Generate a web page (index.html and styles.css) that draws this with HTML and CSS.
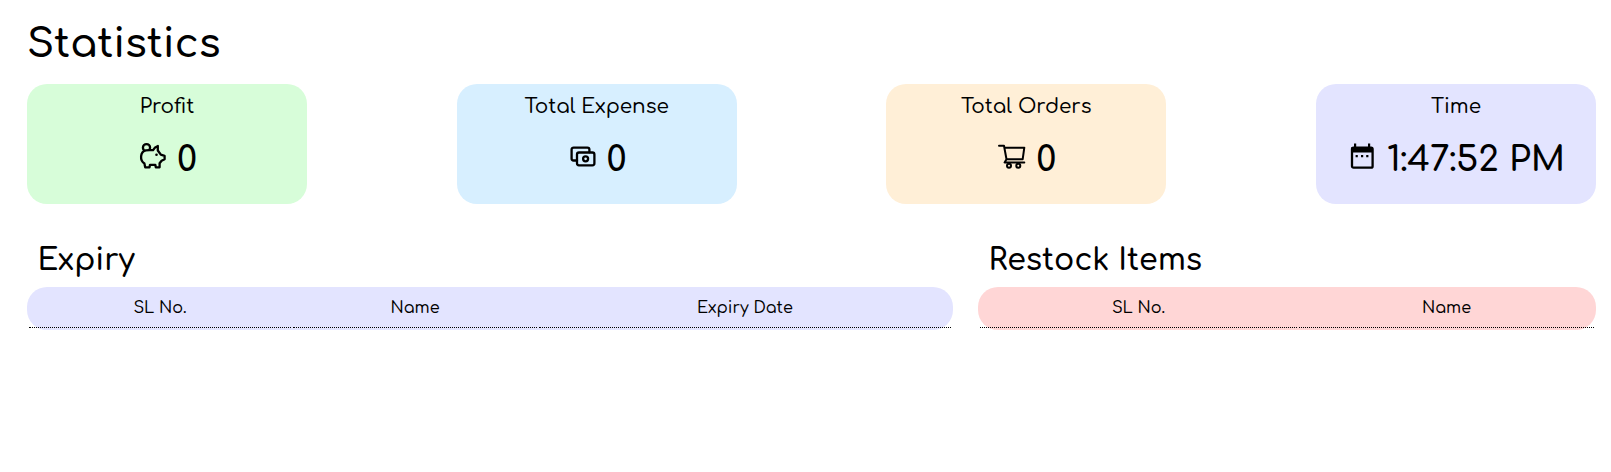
FILE: index.html
```html
<!DOCTYPE html>
<html lang="en">
<head>
<meta charset="utf-8">
<title>Statistics</title>
<link rel="stylesheet" href="styles.css">
</head>
<body>
<main class="page">
  <h1 class="title">Statistics</h1>
  <section class="cards">
    <article class="card card-profit">
      <h2 class="label">Profit</h2>
      <div class="reading">
        <svg class="icon" viewBox="0 0 28 28"><circle cx="7.5" cy="5.7" r="3.6"/><path class="mask-profit" d="M10.5 8.2H14C15 6.2 16.8 4.7 18.8 4V8.5L21.8 12.7 25.6 13.8V17.3L22.6 18.8 20.6 21.3V25.3H16.8L16.3 22.8H11L10.5 25.3H6.2L5.4 21.5C.5 18 1 9.5 7 8.3Z"/><circle class="solid" cx="17.5" cy="12.7" r="1.3"/></svg>
        <span class="value">0</span>
      </div>
    </article>
    <article class="card card-expense">
      <h2 class="label">Total Expense</h2>
      <div class="reading">
        <svg class="icon" viewBox="0 0 28 28"><path d="M8 18.5H4.6a2 2 0 0 1-2-2V7.6a2 2 0 0 1 2-2h13.8a2 2 0 0 1 2 2v2.7"/><rect x="8" y="10.5" width="17.4" height="12.8" rx="2"/><circle cx="16.6" cy="16.8" r="2.5"/></svg>
        <span class="value">0</span>
      </div>
    </article>
    <article class="card card-orders">
      <h2 class="label">Total Orders</h2>
      <div class="reading">
        <svg class="icon icon-cart" viewBox="0 0 28 28"><path d="M1 3.7H6L8.5 17.2H24.7L26.3 5.7H6.4M8.5 17.2 6.6 20.4H26.3"/><circle cx="11" cy="23.7" r="2"/><circle cx="20.3" cy="23.7" r="2"/></svg>
        <span class="value">0</span>
      </div>
    </article>
    <article class="card card-time">
      <h2 class="label">Time</h2>
      <div class="reading">
        <svg class="icon" viewBox="0 0 28 28"><rect x="3" y="5.6" width="20.6" height="20.1" rx="1.5"/><path class="solid" d="M2.5 5H24V10.5H2.5ZM5 1.4H7.2V6H5ZM19 1.4H21.2V6H19ZM6.6 13H8.8V15.2H6.6ZM12 13H14.2V15.2H12ZM17.2 13H19.4V15.2H17.2Z"/></svg>
        <span class="value">1:47:52 PM</span>
      </div>
    </article>
  </section>
  <section class="panels">
    <div class="panel-expiry">
      <h2 class="heading">Expiry</h2>
      <table class="list list-expiry">
        <colgroup><col class="col-sl"><col class="col-name"><col></colgroup>
        <thead><tr><th>SL No.</th><th>Name</th><th>Expiry Date</th></tr></thead>
      </table>
    </div>
    <div class="panel-restock">
      <h2 class="heading">Restock Items</h2>
      <table class="list list-restock">
        <colgroup><col class="col-half"><col></colgroup>
        <thead><tr><th>SL No.</th><th>Name</th></tr></thead>
      </table>
    </div>
  </section>
</main>
</body>
</html>
```
FILE: styles.css
```css
* { box-sizing: border-box; }
body { margin: 0; background: #fff; color: #000; font-family: Comfortaa, Lato, sans-serif; }
h1, h2 { margin: 0; font-weight: 500; white-space: nowrap; }
.page { padding: 16px 15px 0 27px; }
.title { height: 68px; line-height: 57px; font-size: 40px; font-weight: 600; }
.cards { display: flex; justify-content: space-between; }
.card { width: 280px; height: 120px; border-radius: 20px; padding-top: 8px; display: flex; flex-direction: column; align-items: center; }
.card-profit { background: #d7fdd9; }
.card-expense { background: #d7efff; }
.card-orders { background: #ffefd7; }
.card-time { background: #e3e4ff; }
.label { height: 28px; font-size: 20px; line-height: 30px; }
.reading { display: flex; gap: 10px; margin-top: 14px; padding-left: 2px; height: 44px; }
.icon { width: 28px; height: 28px; margin-top: 8px; fill: none; stroke: #000; stroke-width: 2.3; stroke-linejoin: round; stroke-linecap: round; }
.icon-cart { stroke-width: 2; }
.icon .solid { fill: #000; stroke: none; }
.icon .mask-profit { fill: #d7fdd9; }
.value { font-size: 35px; line-height: 52px; font-weight: 600; white-space: nowrap; }
.panels { display: flex; gap: 25px; margin-top: 36px; }
.panel-expiry { width: 926px; }
.panel-restock { width: 618px; }
.heading { height: 47px; line-height: 41px; padding-left: 10.5px; font-size: 30px; font-weight: 600; }
.list { width: 100%; height: 43px; table-layout: fixed; border-spacing: 2px; border-radius: 20px; }
.list-expiry { background: #e3e4ff; }
.list-restock { background: #ffd6d6; }
.col-sl { width: 262px; }
.col-name { width: 244px; }
.col-half { width: 317px; }
th { height: 39px; padding: 0 0 1px; border-bottom: 1px dotted #000; font-size: 16px; font-weight: 500; }
```
